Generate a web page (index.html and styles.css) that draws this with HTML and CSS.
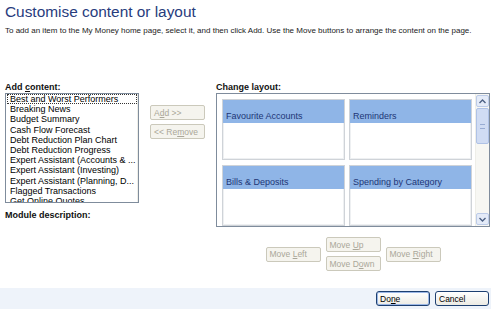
FILE: index.html
```html
<!DOCTYPE html>
<html lang="en">

<head>
    <meta charset="UTF-8">
    <title>Customise content or layout</title>
    <link rel="stylesheet" href="styles.css">
</head>

<body>
    <header class="top">
        <h1>Customise content or layout</h1>
        <p>To add an item to the My Money home page, select it, and then click Add. Use the Move buttons to arrange the content on the page.</p>
    </header>

    <section class="content">
        <div class="left-col">
            <div class="label">Add <u>c</u>ontent:</div>
            <div class="listbox">
                <ul class="items">
                    <li class="focused">Best and Worst Performers</li>
                    <li>Breaking News</li>
                    <li>Budget Summary</li>
                    <li>Cash Flow Forecast</li>
                    <li>Debt Reduction Plan Chart</li>
                    <li>Debt Reduction Progress</li>
                    <li>Expert Assistant (Accounts &amp; ...</li>
                    <li>Expert Assistant (Investing)</li>
                    <li>Expert Assistant (Planning, D...</li>
                    <li>Flagged Transactions</li>
                    <li>Get Online Quotes</li>
                </ul>
                <div class="scrollbar">
                    <div class="arrow">
                        <svg width="7" height="5" viewBox="0 0 7 5"><polyline points="0.5,4 3.5,1 6.5,4" fill="none" stroke="#4d6185" stroke-width="1.4"/></svg>
                    </div>
                    <div class="thumb tall"><span class="grip"></span></div>
                    <div class="track"></div>
                    <div class="arrow">
                        <svg width="7" height="5" viewBox="0 0 7 5"><polyline points="0.5,1 3.5,4 6.5,1" fill="none" stroke="#4d6185" stroke-width="1.4"/></svg>
                    </div>
                </div>
            </div>
            <div class="label desc">Module description:</div>
        </div>

        <div class="mid-col">
            <button class="btn off">A<u>d</u>d &gt;&gt;</button>
            <button class="btn off">&lt;&lt; Re<u>m</u>ove</button>
        </div>

        <div class="right-col">
            <div class="label">Change layout:</div>
            <div class="layout-box">
                <div class="cards">
                    <div class="card"><div class="card-head">Favourite Accounts</div></div>
                    <div class="card"><div class="card-head">Reminders</div></div>
                    <div class="card"><div class="card-head">Bills &amp; Deposits</div></div>
                    <div class="card"><div class="card-head">Spending by Category</div></div>
                </div>
                <div class="scrollbar">
                    <div class="arrow">
                        <svg width="7" height="5" viewBox="0 0 7 5"><polyline points="0.5,4 3.5,1 6.5,4" fill="none" stroke="#4d6185" stroke-width="1.4"/></svg>
                    </div>
                    <div class="thumb short"><span class="grip"></span></div>
                    <div class="track"></div>
                    <div class="arrow">
                        <svg width="7" height="5" viewBox="0 0 7 5"><polyline points="0.5,1 3.5,4 6.5,1" fill="none" stroke="#4d6185" stroke-width="1.4"/></svg>
                    </div>
                </div>
            </div>

            <div class="move-group">
                <button class="btn off">Move <u>L</u>eft</button>
                <div class="move-stack">
                    <button class="btn off">Move <u>U</u>p</button>
                    <button class="btn off">Move D<u>o</u>wn</button>
                </div>
                <button class="btn off">Move <u>R</u>ight</button>
            </div>
        </div>
    </section>

    <footer class="bottom">
        <button class="btn main default">Do<u>n</u>e</button>
        <button class="btn main">Cancel</button>
    </footer>
</body>

</html>
```

FILE: styles.css
```css
body {
    font-family: 'Liberation Sans', Arial, sans-serif;
    margin: 0;
    padding: 0;
    width: 491px;
    height: 309px;
    display: flex;
    flex-direction: column;
    background: #fff;
    color: #000;
    overflow: hidden;
}

.top {
    padding: 2px 5px 0;
}

.top h1 {
    margin: 0;
    font-size: 15.4px;
    line-height: 20px;
    font-weight: normal;
    color: #283c7d;
}

.top p {
    margin: 4px 0 0;
    font-size: 8px;
    line-height: 10px;
    color: #222;
}

.content {
    display: flex;
    margin-top: 46px;
    padding-left: 5px;
}

.label {
    font-size: 9px;
    line-height: 11px;
    font-weight: bold;
    color: #111;
}

.label.desc {
    margin-top: 7px;
}

/* list of modules */
.listbox {
    width: 132px;
    height: 108px;
    border: 1px solid #7f8c9c;
    display: flex;
    overflow: hidden;
}

.items {
    list-style: none;
    margin: 0;
    padding: 0 0 0 1px;
    flex: 1;
    font-size: 9px;
    line-height: 10.2px;
}

.items li {
    padding-left: 2px;
    white-space: nowrap;
    border: 1px solid transparent;
    border-width: 0 1px;
}

.items li.focused {
    border: 1px dotted #333;
    line-height: 8.2px;
}

.scrollbar {
    width: 13px;
    display: flex;
    flex-direction: column;
    background: #f7f7f3;
    border-left: 1px solid #eeeee8;
}

.arrow {
    height: 12px;
    margin: 1px 0;
    background: #e4ebf8;
    border: 1px solid #bccbe8;
    border-radius: 2px;
    display: flex;
    align-items: center;
    justify-content: center;
    box-sizing: border-box;
}

.thumb {
    background: #d0dcf3;
    border: 1px solid #afc2e6;
    border-radius: 2px;
    display: flex;
    align-items: center;
    justify-content: center;
}

.thumb.tall {
    height: 58px;
}

.thumb.short {
    height: 34px;
}

.grip {
    width: 5px;
    height: 5px;
    border-top: 1px solid #98acd3;
    border-bottom: 1px solid #98acd3;
    box-sizing: border-box;
}

.track {
    flex: 1;
}

/* buttons */
.btn {
    font-family: inherit;
    font-size: 8.5px;
    height: 15px;
    width: 55px;
    padding: 0 0 0 3px;
    text-align: left;
    box-sizing: border-box;
    border-radius: 2px;
}

.btn.off {
    background: #f5f4ee;
    border: 1px solid #cbc9bb;
    color: #aaa799;
}

.mid-col {
    display: flex;
    flex-direction: column;
    gap: 4px;
    margin-left: 11px;
    padding-top: 23px;
}

.right-col {
    margin-left: 11px;
    width: 274px;
    display: flex;
    flex-direction: column;
}

.layout-box {
    height: 132px;
    border: 1px solid #7f8c9c;
    display: flex;
    overflow: hidden;
}

.cards {
    flex: 1;
    display: grid;
    grid-template-columns: 123px 123px;
    grid-auto-rows: 61px;
    gap: 5px 4px;
    padding: 5px 0 0 5px;
}

.card {
    border: 1px solid #cfd3d8;
    box-shadow: inset 0 0 0 1px #eef0f2;
    background: #fff;
}

.card-head {
    background: #8fb5e7;
    height: 23px;
    box-sizing: border-box;
    padding: 11px 0 0 3px;
    font-size: 9px;
    line-height: 10px;
    color: #1d3576;
}

.move-group {
    display: flex;
    align-items: center;
    justify-content: center;
    gap: 5px;
    margin-top: 10px;
}

.move-stack {
    display: flex;
    flex-direction: column;
    gap: 4px;
}

/* footer */
.bottom {
    margin-top: auto;
    height: 21px;
    background: #eef3fa;
    display: flex;
    align-items: center;
    justify-content: flex-end;
    gap: 5px;
    padding-right: 2px;
}

.btn.main {
    width: 54px;
    background: linear-gradient(#fff, #ecebe4);
    border: 1px solid #1d3f70;
    border-radius: 3px;
    color: #000;
}

.btn.main.default {
    box-shadow: inset 0 0 0 1px #9bb7e6;
}
```
